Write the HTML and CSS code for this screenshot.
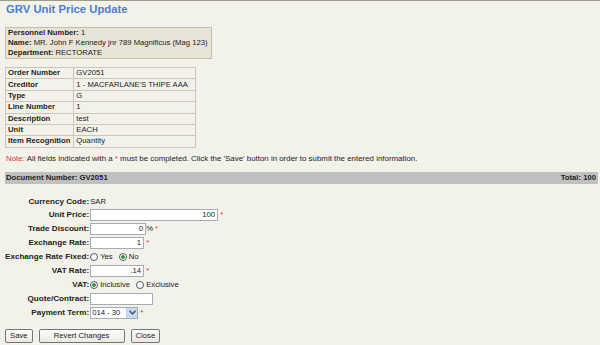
FILE: index.html
```html
<!DOCTYPE html>
<html lang="en">
<head>
  <meta charset="UTF-8">
  <meta name="viewport" content="width=device-width, initial-scale=1.0">
  <title>GRV Unit Price Update</title>
  <link rel="stylesheet" href="styles.css">
</head>
<body>
  <div class="page">
    <h1 class="title">GRV Unit Price Update</h1>

    <div class="person">
      <div><b>Personnel Number:</b> 1</div>
      <div><b>Name:</b> MR. John F Kennedy jnr 789 Magnificus (Mag 123)</div>
      <div><b>Department:</b> RECTORATE</div>
    </div>

    <table class="order">
      <tr><th>Order Number</th><td>GV2051</td></tr>
      <tr><th>Creditor</th><td>1 - MACFARLANE'S THIPE AAA</td></tr>
      <tr><th>Type</th><td>G</td></tr>
      <tr><th>Line Number</th><td>1</td></tr>
      <tr><th>Description</th><td>test</td></tr>
      <tr><th>Unit</th><td>EACH</td></tr>
      <tr><th>Item Recognition</th><td>Quantity</td></tr>
    </table>

    <p class="note"><span class="note-label">Note:</span> All fields indicated with a <span class="req">*</span> must be completed. Click the 'Save' button in order to submit the entered information.</p>

    <div class="docbar">
      <span>Document Number: GV2051</span>
      <span>Total: 100</span>
    </div>

    <table class="form">
      <tr class="short">
        <th>Currency Code:</th>
        <td>SAR</td>
      </tr>
      <tr>
        <th>Unit Price:</th>
        <td><input class="field wide" type="text" value="100"> <span class="req">*</span></td>
      </tr>
      <tr>
        <th>Trade Discount:</th>
        <td><input class="field mid" type="text" value="0">% <span class="req">*</span></td>
      </tr>
      <tr>
        <th>Exchange Rate:</th>
        <td><input class="field small" type="text" value="1"> <span class="req">*</span></td>
      </tr>
      <tr>
        <th>Exchange Rate Fixed:</th>
        <td>
          <label class="opt"><input type="radio" name="fixed">Yes</label>
          <label class="opt"><input type="radio" name="fixed" checked>No</label>
        </td>
      </tr>
      <tr>
        <th>VAT Rate:</th>
        <td><input class="field small" type="text" value=".14"> <span class="req">*</span></td>
      </tr>
      <tr>
        <th>VAT:</th>
        <td>
          <label class="opt"><input type="radio" name="vat" checked>Inclusive</label>
          <label class="opt"><input type="radio" name="vat">Exclusive</label>
        </td>
      </tr>
      <tr>
        <th>Quote/Contract:</th>
        <td><input class="field quote" type="text" value=""></td>
      </tr>
      <tr>
        <th>Payment Term:</th>
        <td>
          <span class="select">
            <span class="select-text">014 - 30</span>
            <span class="select-btn">
              <svg width="7" height="5" viewBox="0 0 7 5"><path d="M0.5 0.8 L3.5 3.8 L6.5 0.8" fill="none" stroke="#4d6185" stroke-width="1.6"/></svg>
            </span>
          </span>
          <span class="req">*</span>
        </td>
      </tr>
    </table>

    <div class="buttons">
      <button class="btn">Save</button>
      <button class="btn revert">Revert Changes</button>
      <button class="btn">Close</button>
    </div>
  </div>
</body>
</html>
```

FILE: styles.css
```css
html, body {
  margin: 0;
  padding: 0;
}
body {
  background: #f3f2ea;
  border-top: 1px solid #9d9b8b;
  font-family: "Liberation Sans", Arial, sans-serif;
  font-size: 7.7px;
  color: #222;
}
.page {
  padding: 0 2px 0 5px;
}

.title {
  margin: 0;
  padding: 1px 0 0 1px;
  font-size: 11.3px;
  line-height: 14px;
  font-weight: bold;
  color: #4c7ecf;
}

.person {
  display: inline-block;
  margin-top: 11px;
  padding: 0 3px 0 2px;
  background: #e7e4d7;
  border: 1px solid #c2beac;
  line-height: 10px;
}

.order {
  display: table;
  margin-top: 8px;
  border-collapse: collapse;
  line-height: 10px;
}
.order th, .order td {
  border: 1px solid #c9c6ba;
  padding: 0.2px 3px 0.2px 2px;
  text-align: left;
  white-space: nowrap;
}
.order td {
  width: 116px;
}

.note {
  margin: 6px 0 0 1px;
  font-size: 7.9px;
  line-height: 10px;
}
.note-label {
  color: #d83232;
}
.req {
  color: #e03a3a;
}

.docbar {
  display: flex;
  justify-content: space-between;
  margin-top: 8px;
  padding: 0 2px 0 1px;
  height: 12px;
  line-height: 12px;
  background: #c0c0c0;
  font-weight: bold;
  color: #222;
}

.form {
  margin-top: 12px;
  border-collapse: collapse;
}
.form tr {
  height: 14px;
}
.form .short {
  height: 12px;
}
.form th, .form td {
  padding: 0;
  line-height: 12px;
  white-space: nowrap;
  vertical-align: middle;
}
.form th {
  width: 84px;
  padding-right: 1px;
  font-size: 8.1px;
  text-align: right;
}

.field {
  box-sizing: border-box;
  height: 12px;
  margin: 0;
  padding: 0 2px;
  border: 1px solid #a5acb5;
  background: #fff;
  font-family: "Liberation Sans", Arial, sans-serif;
  font-size: 7.7px;
  text-align: right;
  vertical-align: top;
  color: #222;
}
.wide { width: 128px; }
.mid { width: 56px; }
.small { width: 54px; }
.quote { width: 63px; }

.opt {
  display: inline-flex;
  align-items: center;
  height: 12px;
  margin-right: 4px;
  vertical-align: top;
}
.opt input {
  appearance: none;
  -webkit-appearance: none;
  box-sizing: border-box;
  width: 8px;
  height: 8px;
  margin: 0 2px 0 0;
  border: 1px solid #4e5a6c;
  border-radius: 50%;
  background: #fff;
}
.opt input:checked {
  background: radial-gradient(circle, #3f9a3a 0, #3f9a3a 1.6px, #fff 2.2px);
}

.select {
  display: inline-flex;
  box-sizing: border-box;
  width: 48px;
  height: 12px;
  border: 1px solid #a5acb5;
  background: #fff;
  vertical-align: top;
}
.select-text {
  flex: 1;
  padding-left: 1px;
  line-height: 10px;
}
.select-btn {
  display: flex;
  align-items: center;
  justify-content: center;
  width: 10px;
  background: #c9d8f5;
  border-left: 1px solid #b8c9ea;
}

.buttons {
  display: flex;
  gap: 6px;
  margin-top: 9px;
}
.btn {
  box-sizing: border-box;
  height: 14px;
  padding: 0 4px;
  border: 1px solid #6d7684;
  border-radius: 2px;
  background: linear-gradient(#fdfdfb, #ebe9e0);
  font-family: "Liberation Sans", Arial, sans-serif;
  font-size: 7.7px;
  color: #222;
  line-height: 12px;
}
.revert {
  width: 86px;
}
```
